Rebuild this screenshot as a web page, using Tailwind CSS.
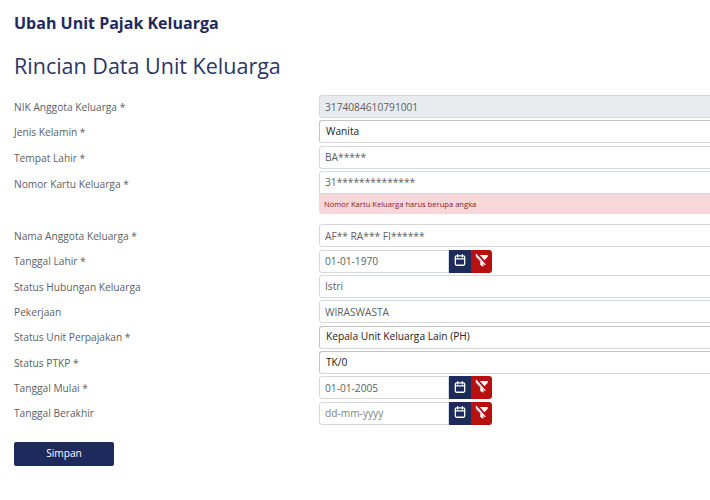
<!DOCTYPE html>
<html lang="id">
<head>
    <meta charset="UTF-8">
    <meta name="viewport" content="width=device-width, initial-scale=1.0">
    <title>Ubah Unit Pajak Keluarga</title>
    <script src="https://cdn.jsdelivr.net/npm/@tailwindcss/browser@4"></script>
</head>
<body class="bg-white h-[500px] overflow-hidden font-['Open_Sans',sans-serif]">
    <div class="w-[710px] overflow-hidden pl-[14px] pt-[11px]">
        <h1 class="text-[16px] leading-[24px] font-bold text-[#1f2a5c]">Ubah Unit Pajak Keluarga</h1>
        <h2 class="mt-[15px] text-[21.5px] leading-[32px] text-[#2b3566]">Rincian Data Unit Keluarga</h2>

        <form class="mt-[13px] flex flex-col gap-[2.33px] text-[10.2px] text-[#5c5f63]">
            <div class="flex items-center h-[23px]">
                <label class="w-[305px] shrink-0 pt-[2px]">NIK Anggota Keluarga *</label>
                <input value="3174084610791001" disabled class="w-[420px] shrink-0 h-full px-[5px] rounded-[3px] border border-[#d5d8dc] bg-[#e9ecef] text-[#5c5f63] outline-none">
            </div>
            <div class="flex items-center h-[23px]">
                <label class="w-[305px] shrink-0 pt-[2px]">Jenis Kelamin *</label>
                <select class="w-[420px] shrink-0 h-full pl-[6px] rounded-[3px] border-t border-l border-r border-b border-t-[#c4c4c4] border-l-[#c4c4c4] border-r-[#d5d8dc] border-b-[#d5d8dc] bg-white text-[#222] appearance-none outline-none">
                    <option>Wanita</option>
                </select>
            </div>
            <div class="flex items-center h-[23px]">
                <label class="w-[305px] shrink-0 pt-[2px]">Tempat Lahir *</label>
                <input value="BA*****" class="w-[420px] shrink-0 h-full px-[5px] rounded-[3px] border border-[#d5d8dc] bg-white text-[#5c5f63] outline-none">
            </div>
            <div class="flex items-start">
                <label class="w-[305px] shrink-0 leading-[23px] pt-[2px]">Nomor Kartu Keluarga *</label>
                <div class="w-[420px] shrink-0">
                    <input value="31**************" class="w-full h-[23px] px-[5px] rounded-t-[3px] border border-[#d5d8dc] bg-white text-[#5c5f63] outline-none">
                    <div class="h-[20px] px-[5px] rounded-b-[3px] bg-[#f8d7da] text-[7.6px] leading-[20px] text-[#842029]">Nomor Kartu Keluarga harus berupa angka</div>
                </div>
            </div>
            <div class="flex items-center h-[23px] mt-[8px]">
                <label class="w-[305px] shrink-0 pt-[2px]">Nama Anggota Keluarga *</label>
                <input value="AF** RA*** FI******" class="w-[420px] shrink-0 h-full px-[5px] rounded-[3px] border border-[#d5d8dc] bg-white text-[#5c5f63] outline-none">
            </div>
            <div class="flex items-center h-[23px]">
                <label class="w-[305px] shrink-0 pt-[2px]">Tanggal Lahir *</label>
                <input value="01-01-1970" class="w-[130px] shrink-0 h-full px-[5px] rounded-l-[3px] border border-[#d5d8dc] bg-white text-[#5c5f63] outline-none">
                <button type="button" class="w-[22px] h-full pb-[2px] flex items-center justify-center bg-[#1f2a5c]">
                    <svg width="14" height="14" viewBox="0 0 24 24" fill="none" stroke="white" stroke-width="2.2" stroke-linecap="round" stroke-linejoin="round"><rect x="4" y="5" width="16" height="16" rx="2"/><path d="M16 3v4M8 3v4M4 10h16"/></svg>
                </button>
                <button type="button" class="w-[21px] h-full pb-[2px] flex items-center justify-center rounded-r-[3px] bg-[#b71010]">
                    <svg width="15" height="15" viewBox="0 0 24 24"><path d="M3 3h19v3l-7 7v9l-5-3v-6L3 6z" fill="white"/><path d="M4 1l17 19" fill="none" stroke="#b71010" stroke-width="5"/><path d="M3 2l15 17" fill="none" stroke="white" stroke-width="2.2"/></svg>
                </button>
            </div>
            <div class="flex items-center h-[23px]">
                <label class="w-[305px] shrink-0 pt-[2px]">Status Hubungan Keluarga</label>
                <input value="Istri" class="w-[420px] shrink-0 h-full px-[5px] rounded-[3px] border border-[#d5d8dc] bg-white text-[#5c5f63] outline-none">
            </div>
            <div class="flex items-center h-[23px]">
                <label class="w-[305px] shrink-0 pt-[2px]">Pekerjaan</label>
                <input value="WIRASWASTA" class="w-[420px] shrink-0 h-full px-[5px] rounded-[3px] border border-[#d5d8dc] bg-white text-[#5c5f63] outline-none">
            </div>
            <div class="flex items-center h-[23px]">
                <label class="w-[305px] shrink-0 pt-[2px]">Status Unit Perpajakan *</label>
                <select class="w-[420px] shrink-0 h-full pl-[6px] rounded-[3px] border-t border-l border-r border-b border-t-[#c4c4c4] border-l-[#c4c4c4] border-r-[#d5d8dc] border-b-[#d5d8dc] bg-white text-[#222] appearance-none outline-none">
                    <option>Kepala Unit Keluarga Lain (PH)</option>
                </select>
            </div>
            <div class="flex items-center h-[23px]">
                <label class="w-[305px] shrink-0 pt-[2px]">Status PTKP *</label>
                <select class="w-[420px] shrink-0 h-full pl-[6px] rounded-[3px] border-t border-l border-r border-b border-t-[#c4c4c4] border-l-[#c4c4c4] border-r-[#d5d8dc] border-b-[#d5d8dc] bg-white text-[#222] appearance-none outline-none">
                    <option>TK/0</option>
                </select>
            </div>
            <div class="flex items-center h-[23px]">
                <label class="w-[305px] shrink-0 pt-[2px]">Tanggal Mulai *</label>
                <input value="01-01-2005" class="w-[130px] shrink-0 h-full px-[5px] rounded-l-[3px] border border-[#d5d8dc] bg-white text-[#5c5f63] outline-none">
                <button type="button" class="w-[22px] h-full pb-[2px] flex items-center justify-center bg-[#1f2a5c]">
                    <svg width="14" height="14" viewBox="0 0 24 24" fill="none" stroke="white" stroke-width="2.2" stroke-linecap="round" stroke-linejoin="round"><rect x="4" y="5" width="16" height="16" rx="2"/><path d="M16 3v4M8 3v4M4 10h16"/></svg>
                </button>
                <button type="button" class="w-[21px] h-full pb-[2px] flex items-center justify-center rounded-r-[3px] bg-[#b71010]">
                    <svg width="15" height="15" viewBox="0 0 24 24"><path d="M3 3h19v3l-7 7v9l-5-3v-6L3 6z" fill="white"/><path d="M4 1l17 19" fill="none" stroke="#b71010" stroke-width="5"/><path d="M3 2l15 17" fill="none" stroke="white" stroke-width="2.2"/></svg>
                </button>
            </div>
            <div class="flex items-center h-[23px]">
                <label class="w-[305px] shrink-0 pt-[2px]">Tanggal Berakhir</label>
                <input placeholder="dd-mm-yyyy" class="w-[130px] shrink-0 h-full px-[5px] rounded-l-[3px] border border-[#d5d8dc] bg-white text-[#5c5f63] placeholder:text-[#7d8186] outline-none">
                <button type="button" class="w-[22px] h-full pb-[2px] flex items-center justify-center bg-[#1f2a5c]">
                    <svg width="14" height="14" viewBox="0 0 24 24" fill="none" stroke="white" stroke-width="2.2" stroke-linecap="round" stroke-linejoin="round"><rect x="4" y="5" width="16" height="16" rx="2"/><path d="M16 3v4M8 3v4M4 10h16"/></svg>
                </button>
                <button type="button" class="w-[21px] h-full pb-[2px] flex items-center justify-center rounded-r-[3px] bg-[#b71010]">
                    <svg width="15" height="15" viewBox="0 0 24 24"><path d="M3 3h19v3l-7 7v9l-5-3v-6L3 6z" fill="white"/><path d="M4 1l17 19" fill="none" stroke="#b71010" stroke-width="5"/><path d="M3 2l15 17" fill="none" stroke="white" stroke-width="2.2"/></svg>
                </button>
            </div>
            <button type="button" class="mt-[15px] w-[100px] h-[24px] rounded-[2px] bg-[#1f2a5c] text-white text-[10.2px]">Simpan</button>
        </form>
    </div>
</body>
</html>
